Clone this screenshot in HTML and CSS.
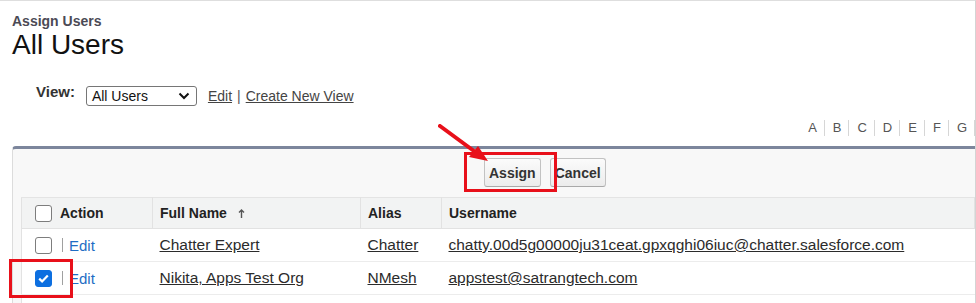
FILE: index.html
```html
<!DOCTYPE html>
<html>
<head>
    <meta charset="utf-8">
    <title>Assign Users</title>
    <link rel="stylesheet" href="styles.css">
</head>
<body>
<div class="page">
    <div class="title-block">
        <h2>Assign Users</h2>
        <h1>All Users</h1>
    </div>

    <div class="view-bar">
        <span class="view-label">View:</span>
        <div class="select">
            <span>All Users</span>
            <svg width="12" height="8" viewBox="0 0 12 8"><path d="M1.5 1.5 L6 6 L10.5 1.5" fill="none" stroke="#111" stroke-width="2"/></svg>
        </div>
        <a href="#">Edit</a>
        <span class="sep">|</span>
        <a href="#">Create New View</a>
    </div>

    <ul class="alpha">
        <li>A</li>
        <li>B</li>
        <li>C</li>
        <li>D</li>
        <li>E</li>
        <li>F</li>
        <li>G</li>
    </ul>

    <div class="list-box">
        <div class="buttons">
            <button>Assign</button>
            <button>Cancel</button>
        </div>
        <table>
            <thead>
                <tr>
                    <th class="col-action"><div class="action-cell"><span class="check"></span>Action</div></th>
                    <th class="col-name">Full Name <svg class="sort" width="7" height="9" viewBox="0 0 7 9"><path d="M3.5 1 L3.5 9 M1 3.5 L3.5 1 L6 3.5" fill="none" stroke="#555" stroke-width="1.4"/></svg></th>
                    <th class="col-alias">Alias</th>
                    <th>Username</th>
                </tr>
            </thead>
            <tbody>
                <tr>
                    <td class="col-action"><div class="action-cell"><span class="check"></span><span class="bar"></span><a class="edit" href="#">Edit</a></div></td>
                    <td><a href="#">Chatter Expert</a></td>
                    <td><a href="#">Chatter</a></td>
                    <td><a href="#">chatty.00d5g00000ju31ceat.gpxqghi06iuc@chatter.salesforce.com</a></td>
                </tr>
                <tr>
                    <td class="col-action"><div class="action-cell"><span class="check checked"><svg width="11" height="9" viewBox="0 0 11 9"><path d="M1.2 4.6 L4.1 7.4 L9.8 1.4" fill="none" stroke="#fff" stroke-width="2.2"/></svg></span><span class="bar"></span><a class="edit" href="#">Edit</a></div></td>
                    <td><a href="#">Nikita, Apps Test Org</a></td>
                    <td><a href="#">NMesh</a></td>
                    <td><a href="#">appstest@satrangtech.com</a></td>
                </tr>
                <tr class="filler">
                    <td class="col-action"></td>
                    <td></td>
                    <td></td>
                    <td></td>
                </tr>
            </tbody>
        </table>
    </div>

    <!-- red annotations drawn over the screenshot -->
    <div class="mark mark-assign"></div>
    <div class="mark mark-check"></div>
    <svg class="pointer" width="60" height="45" viewBox="0 0 60 45">
        <path d="M2 2 L40 30" stroke="#e8101a" stroke-width="4" stroke-linecap="round"/>
        <path d="M50 37 L31 33 L40 22 Z" fill="#e8101a"/>
    </svg>
</div>
</body>
</html>
```

FILE: styles.css
```css
html, body {
    margin: 0;
    padding: 0;
    background: #fff;
}

body {
    font-family: "Liberation Sans", Arial, sans-serif;
    color: #222;
}

.page {
    position: relative;
    width: 976px;
    height: 303px;
    box-sizing: border-box;
    border-top: 1px solid #dedede;
    border-right: 1px solid #d4d4d4;
    overflow: hidden;
}

.title-block {
    padding: 12px 0 0 12px;
}

.title-block h2 {
    margin: 0;
    font-size: 14px;
    line-height: 16px;
    font-weight: bold;
    color: #4b4a55;
}

.title-block h1 {
    margin: 0;
    font-size: 28px;
    line-height: 32px;
    font-weight: normal;
    color: #111;
}

.view-bar {
    display: flex;
    align-items: center;
    margin-top: 25px;
    padding-left: 36px;
    height: 20px;
    font-size: 14px;
}

.view-label {
    align-self: flex-start;
    margin-top: -3px;
    margin-right: 11px;
    font-size: 15px;
    font-weight: bold;
    line-height: 18px;
    color: #333;
}

.select {
    display: flex;
    align-items: center;
    justify-content: space-between;
    box-sizing: border-box;
    width: 111px;
    height: 20px;
    padding: 0 6px 0 5px;
    border: 1px solid #767676;
    border-radius: 3px;
    color: #111;
    font-size: 14px;
}

.view-bar a {
    color: #444;
    text-decoration: underline;
}

.view-bar .select + a {
    margin-left: 11px;
}

.view-bar .sep {
    margin: 0 5px;
    color: #555;
}

.alpha {
    display: flex;
    justify-content: flex-end;
    margin: 14px 0 0;
    padding: 0;
    list-style: none;
}

.alpha li {
    padding: 0 7px 0 8px;
    border-right: 1px solid #d6d6d6;
    font-size: 13px;
    line-height: 16px;
    color: #555;
}

.list-box {
    margin: 10px 0 0 12px;
    padding: 9px 0 0 8px;
    background: #f8f8f8;
    border-top: 3px solid #7c869c;
    border-left: 1px solid #dcdcdc;
    border-radius: 4px 0 0 0;
}

.buttons {
    display: flex;
    gap: 9px;
    padding-left: 463px;
    margin-bottom: 10px;
}

.buttons button {
    height: 29px;
    padding: 0 4px;
    font-family: "Liberation Sans", Arial, sans-serif;
    font-size: 14px;
    font-weight: bold;
    color: #333;
    background: linear-gradient(#fbfbfb, #ececec);
    border: 1px solid #c2c2c2;
    border-bottom-color: #a9a9a9;
    border-radius: 3px;
}

table {
    width: 100%;
    border-collapse: collapse;
    border-left: 1px solid #e2e2e2;
    font-size: 15.5px;
}

th {
    height: 30px;
    padding: 0 0 0 7px;
    text-align: left;
    font-size: 14px;
    font-weight: bold;
    color: #222;
    background: #f2f3f3;
    border-top: 1px solid #e4e4e4;
    border-bottom: 1px solid #e2e2e2;
    border-right: 1px solid #e2e2e2;
}

td {
    height: 32px;
    padding: 0 0 0 7px;
    background: #fff;
    border-bottom: 1px solid #ececec;
}

td a {
    color: #2b2b2b;
    text-decoration: underline;
}

.col-action {
    width: 117px;
}

th.col-action,
td.col-action {
    padding-left: 13px;
}

.col-name {
    width: 200px;
}

.col-alias {
    width: 73px;
}

.action-cell {
    display: flex;
    align-items: center;
}

.check {
    display: inline-flex;
    align-items: center;
    justify-content: center;
    box-sizing: border-box;
    width: 17px;
    height: 17px;
    margin-right: 8px;
    background: #fff;
    border: 1.5px solid #7d7d7d;
    border-radius: 3px;
}

.check.checked {
    background: #0d6fe0;
    border-color: #0d6fe0;
}

.bar {
    width: 1px;
    height: 14px;
    margin: 0 6px 0 2px;
    background: #a0a0a0;
}

td a.edit {
    color: #1f6dc4;
    font-size: 15px;
    text-decoration: none;
}

.sort {
    margin-left: 7px;
    vertical-align: 0;
}

.filler td {
    height: 20px;
}

.mark {
    position: absolute;
    box-sizing: border-box;
    border: 3px solid #e8101a;
}

.mark-assign {
    left: 464px;
    top: 151px;
    width: 93px;
    height: 40px;
}

.mark-check {
    left: 9px;
    top: 258px;
    width: 64px;
    height: 39px;
}

.pointer {
    position: absolute;
    left: 438px;
    top: 123px;
}
```
